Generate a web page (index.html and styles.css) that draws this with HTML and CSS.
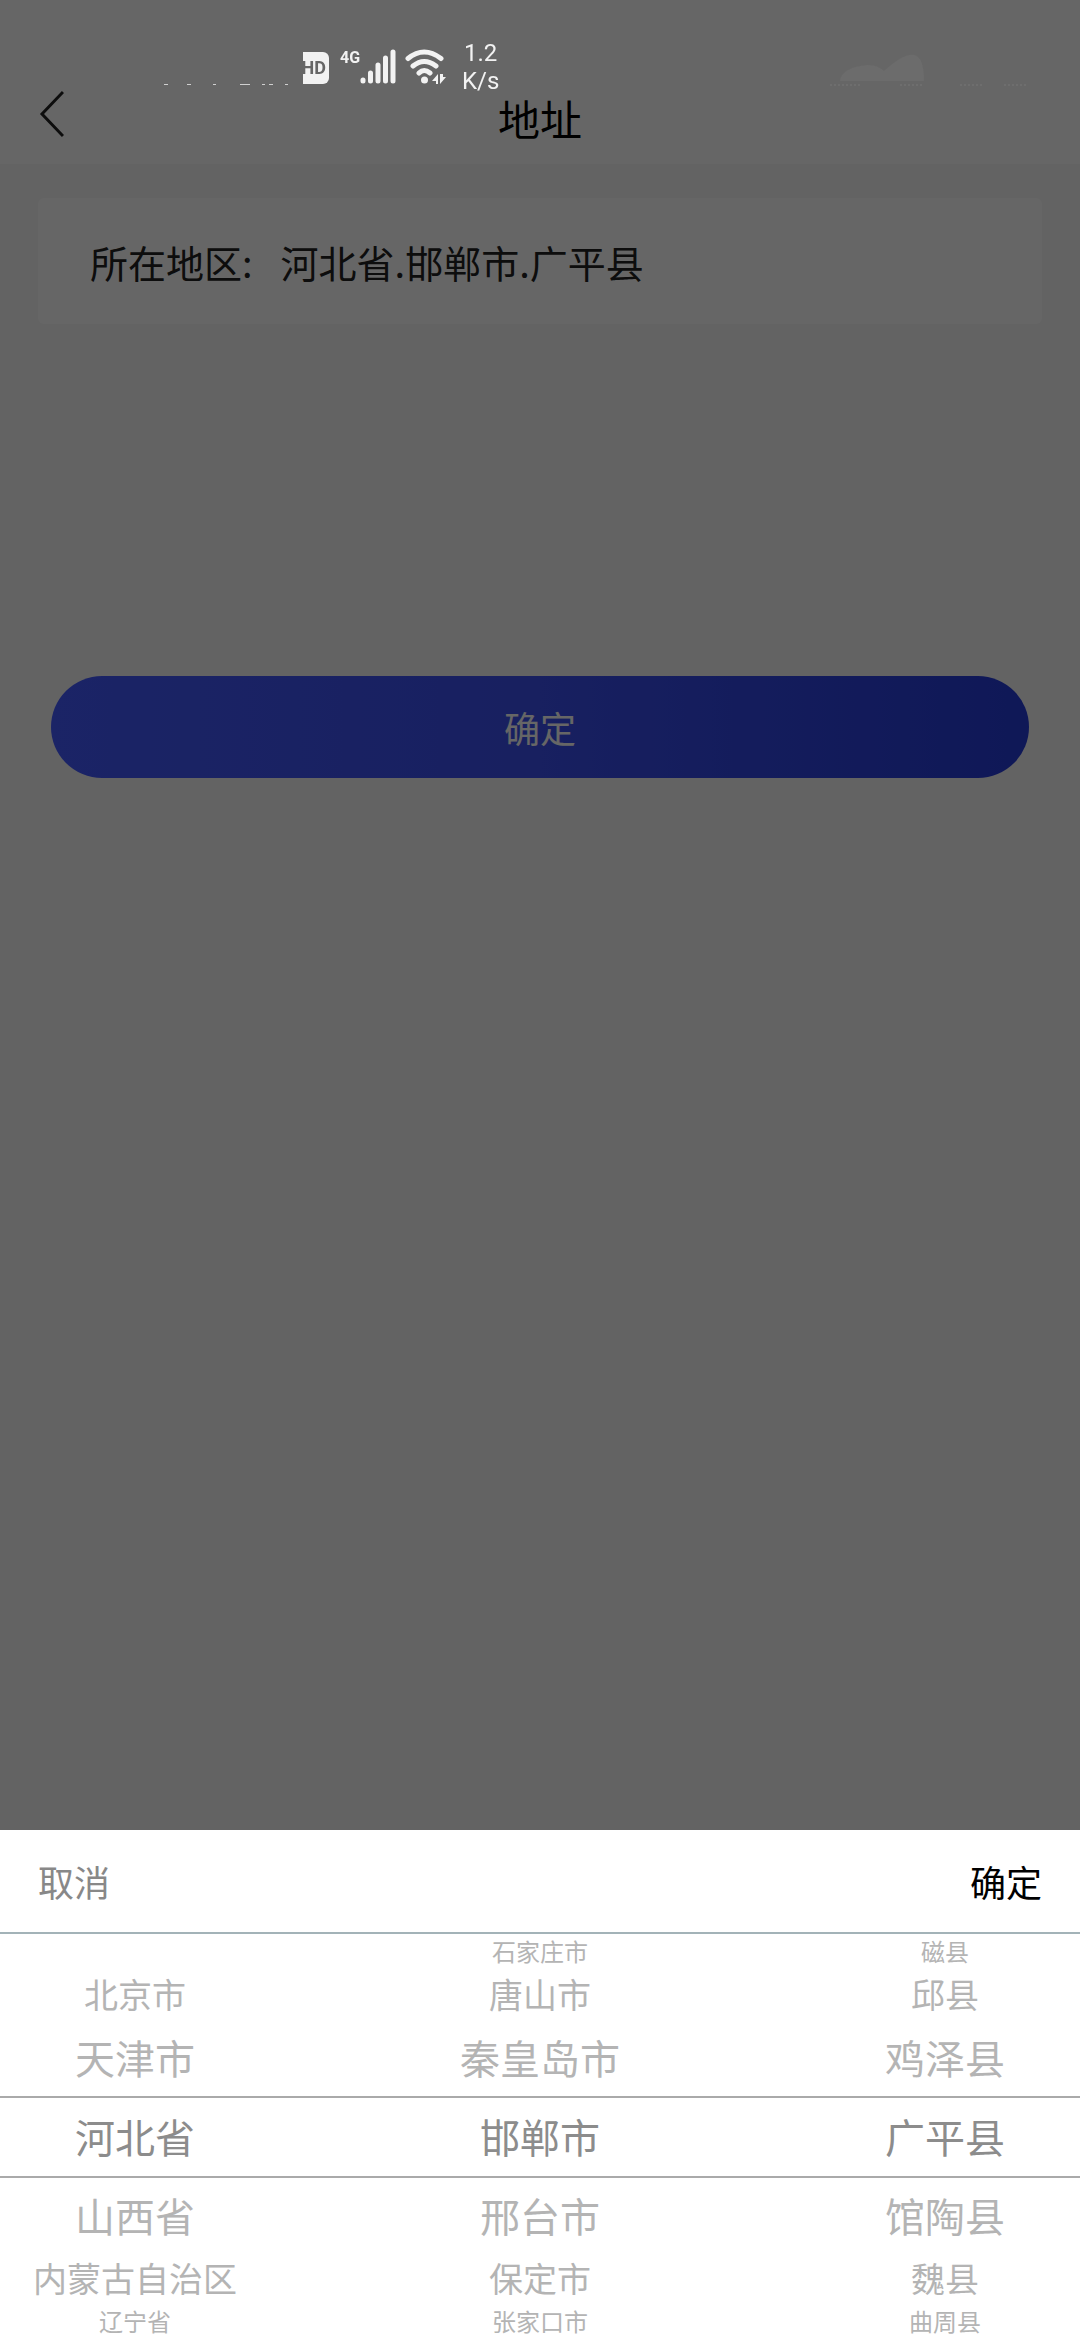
FILE: index.html
```html
<!DOCTYPE html>
<html lang="zh-CN">
<head>
  <meta charset="UTF-8">
  <meta name="viewport" content="width=device-width, initial-scale=1">
  <title>地址</title>
  <link rel="stylesheet" href="styles.css">
</head>
<body>
  <!-- 页面 -->
  <header class="navbar">
    <button class="back" type="button" aria-label="返回">
      <svg width="26" height="48" viewBox="0 0 26 48" fill="none" stroke="#222" stroke-width="3">
        <path d="M25 2L4 24L25 46"/>
      </svg>
    </button>
    <h1>地址</h1>
  </header>

  <main>
    <div class="card">
      <span class="label">所在地区:</span>
      <span class="value">河北省.邯郸市.广平县</span>
    </div>
    <button class="submit" type="button">确定</button>
  </main>

  <!-- 遮罩 -->
  <div class="mask"></div>

  <!-- 状态栏 -->
  <div class="status">
    <svg class="noise" width="140" height="36" viewBox="0 0 140 36" fill="#d0d0d0">
      <path d="M1 35h4v1h-4zM24 35h4v1h-4zM50 35h3v1h-3zM77 35h10v1h-10zM99 35h3v1h-3zM106 35h4v1h-4zM122 35h3v1h-3z"/>
    </svg>
    <span class="hd">HD</span>
    <span class="net">4G</span>
    <svg class="signal" width="36" height="36" viewBox="0 0 36 36" stroke="#f2f2f2" stroke-width="5" stroke-linecap="round">
      <path d="M3 31V32M10.500 24V32M18 16V32M25.500 9V32M33 3V32"/>
    </svg>
    <svg class="wifi" width="42" height="36" viewBox="0 0 42 36" fill="none" stroke="#f2f2f2" stroke-width="5" stroke-linecap="round">
      <path d="M3 9.500Q19 -3.500 36 9.500M8 17Q19 8 31 17M14 24Q19 19 25 24"/>
      <circle cx="19.500" cy="31" r="3.500" fill="#f2f2f2" stroke="none"/>
      <path d="M27 32L33 25V35H31V32ZM35 25V35L41 28H38V25Z" fill="#f2f2f2" stroke="none"/>
    </svg>
    <span class="speed">1.2<br>K/s</span>
    <svg class="smudge" width="260" height="40" viewBox="0 0 260 40">
      <path d="M20 32Q22 18 48 16Q58 16 64 22Q84 4 94 6Q104 8 104 32Z" fill="#6c6c6c"/>
      <path d="M10 36h30M80 36h22M140 36h24M184 36h24" stroke="#777" stroke-dasharray="2 2"/>
    </svg>
  </div>

  <!-- 地区选择器 -->
  <section class="picker">
    <div class="picker-bar">
      <button class="cancel" type="button">取消</button>
      <button class="ok" type="button">确定</button>
    </div>
    <div class="wheels">
      <ul class="wheel" role="listbox" aria-label="省">
        <li class="far"></li>
        <li class="mid" role="option">北京市</li>
        <li class="near" role="option">天津市</li>
        <li class="selected" role="option" aria-selected="true">河北省</li>
        <li class="near" role="option">山西省</li>
        <li class="mid" role="option">内蒙古自治区</li>
        <li class="far" role="option">辽宁省</li>
      </ul>
      <ul class="wheel" role="listbox" aria-label="市">
        <li class="far" role="option">石家庄市</li>
        <li class="mid" role="option">唐山市</li>
        <li class="near" role="option">秦皇岛市</li>
        <li class="selected" role="option" aria-selected="true">邯郸市</li>
        <li class="near" role="option">邢台市</li>
        <li class="mid" role="option">保定市</li>
        <li class="far" role="option">张家口市</li>
      </ul>
      <ul class="wheel" role="listbox" aria-label="县">
        <li class="far" role="option">磁县</li>
        <li class="mid" role="option">邱县</li>
        <li class="near" role="option">鸡泽县</li>
        <li class="selected" role="option" aria-selected="true">广平县</li>
        <li class="near" role="option">馆陶县</li>
        <li class="mid" role="option">魏县</li>
        <li class="far" role="option">曲周县</li>
      </ul>
    </div>
  </section>
</body>
</html>
```
FILE: styles.css
```css
* {
  box-sizing: border-box;
}

body {
  margin: 0;
  min-height: 100vh;
  background: #f7f7f7;
  font-family: "Noto Sans CJK SC", sans-serif;
  color: #222;
}

button {
  padding: 0;
  border: none;
  background: none;
  font-family: inherit;
  cursor: pointer;
}

/* 顶部导航 */
.navbar {
  display: grid;
  grid-template-columns: 80px 1fr 80px;
  align-items: center;
  height: 164px;
  padding: 72px 38px 0;
  background: #fff;
}

.back {
  display: flex;
  padding-bottom: 8px;
}

.navbar h1 {
  margin: 0;
  text-align: center;
  font-size: 42px;
  font-weight: 400;
  line-height: 90px;
  color: #000;
}

main {
  padding: 34px 38px;
}

.card {
  display: flex;
  align-items: center;
  gap: 28px;
  height: 126px;
  padding: 0 52px;
  border-radius: 6px;
  background: #fff;
  font-size: 38px;
}

/* 确定按钮 */
.submit {
  display: block;
  width: calc(100% - 26px);
  height: 102px;
  margin: 352px auto 0;
  border-radius: 51px;
  background: linear-gradient(to right, #445aff, #3c50f0 50%, #263cd9);
  color: #fff;
  font-size: 36px;
  font-weight: 400;
}

.mask {
  position: fixed;
  inset: 0;
  background: rgba(0, 0, 0, 0.6);
}

/* 状态栏浮在遮罩上面 */
.status {
  position: fixed;
  top: 0;
  left: 0;
  right: 0;
  display: flex;
  align-items: flex-start;
  padding: 49px 0 0 163px;
  color: #f2f2f2;
  font-family: Roboto, sans-serif;
}

.hd {
  display: flex;
  justify-content: flex-end;
  width: 26px;
  margin-top: 3px;
  padding-right: 3px;
  overflow: hidden;
  border-radius: 0 6px 6px 0;
  background: #f2f2f2;
  color: #666;
  font-size: 18px;
  font-weight: 700;
  line-height: 32px;
}

.net {
  width: 20px;
  margin-left: 11px;
  font-size: 16px;
  font-weight: 700;
  line-height: 18px;
}

.wifi {
  margin-left: 9px;
}

.speed {
  margin: -10px 0 0 15px;
  font-size: 24px;
  line-height: 28px;
  text-align: center;
}

.smudge {
  margin-left: auto;
}

/* 底部选择器 */
.picker {
  position: fixed;
  left: 0;
  right: 0;
  bottom: 0;
  background: #fff;
}

.picker-bar {
  display: flex;
  justify-content: space-between;
  height: 104px;
  padding: 0 38px;
  border-bottom: 2px solid #a3b3b8;
}

.picker-bar button {
  font-size: 36px;
}

.cancel {
  color: #888;
}

.ok {
  color: #000;
}

.wheels {
  display: grid;
  grid-template-columns: 1fr 2fr 1fr;
}

.wheel {
  margin: 0;
  padding: 0;
  list-style: none;
  text-align: center;
  white-space: nowrap;
  font-size: 40px;
  color: #b4b4b4;
}

/* 越远离中间，字越小 */
.far {
  height: 36px;
  font-size: 24px;
  line-height: 34px;
}

.mid {
  height: 50px;
  font-size: 34px;
  line-height: 48px;
}

.near {
  height: 76px;
  line-height: 74px;
}

.selected {
  height: 82px;
  border-top: 2px solid #aaa;
  border-bottom: 2px solid #aaa;
  line-height: 76px;
  color: #8c8c8c;
}
```
